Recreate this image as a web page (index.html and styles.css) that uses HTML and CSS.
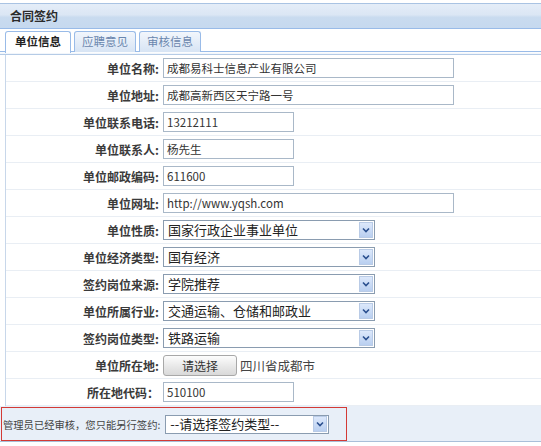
FILE: index.html
```html
<!DOCTYPE html>
<html lang="zh-CN">
<head>
<meta charset="utf-8">
<title>合同签约</title>
<link rel="stylesheet" href="styles.css">
</head>
<body>
<div class="panel">
  <div class="header">合同签约</div>
  <div class="tabbar">
    <div class="tab active">单位信息</div>
    <div class="tab">应聘意见</div>
    <div class="tab">审核信息</div>
  </div>
  <div class="strip"></div>
  <div class="form">
    <div class="row"><label>单位名称:</label><div class="input long">成都易科士信息产业有限公司</div></div>
    <div class="row"><label>单位地址:</label><div class="input long">成都高新西区天宁路一号</div></div>
    <div class="row"><label>单位联系电话:</label><div class="input short">13212111</div></div>
    <div class="row"><label>单位联系人:</label><div class="input short">杨先生</div></div>
    <div class="row"><label>单位邮政编码:</label><div class="input short">611600</div></div>
    <div class="row"><label>单位网址:</label><div class="input long">http://www.yqsh.com</div></div>
    <div class="row"><label>单位性质:</label><div class="select"><span class="stext">国家行政企业事业单位</span><span class="arrow"><svg width="8" height="6" viewBox="0 0 8 6"><path d="M1 1.5 L4 4.5 L7 1.5" fill="none" stroke="#2a4f8f" stroke-width="1.6"/></svg></span></div></div>
    <div class="row"><label>单位经济类型:</label><div class="select"><span class="stext">国有经济</span><span class="arrow"><svg width="8" height="6" viewBox="0 0 8 6"><path d="M1 1.5 L4 4.5 L7 1.5" fill="none" stroke="#2a4f8f" stroke-width="1.6"/></svg></span></div></div>
    <div class="row"><label>签约岗位来源:</label><div class="select"><span class="stext">学院推荐</span><span class="arrow"><svg width="8" height="6" viewBox="0 0 8 6"><path d="M1 1.5 L4 4.5 L7 1.5" fill="none" stroke="#2a4f8f" stroke-width="1.6"/></svg></span></div></div>
    <div class="row"><label>单位所属行业:</label><div class="select"><span class="stext">交通运输、仓储和邮政业</span><span class="arrow"><svg width="8" height="6" viewBox="0 0 8 6"><path d="M1 1.5 L4 4.5 L7 1.5" fill="none" stroke="#2a4f8f" stroke-width="1.6"/></svg></span></div></div>
    <div class="row"><label>签约岗位类型:</label><div class="select"><span class="stext">铁路运输</span><span class="arrow"><svg width="8" height="6" viewBox="0 0 8 6"><path d="M1 1.5 L4 4.5 L7 1.5" fill="none" stroke="#2a4f8f" stroke-width="1.6"/></svg></span></div></div>
    <div class="row"><label>单位所在地:</label><div class="field"><span class="btn">请选择</span><span class="place">四川省成都市</span></div></div>
    <div class="row"><label>所在地代码：</label><div class="input short">510100</div></div>
  </div>
  <div class="footer">
    <div class="notice">
      <span class="ntext">管理员已经审核，您只能另行签约:</span>
      <div class="select small"><span class="stext">--请选择签约类型--</span><span class="arrow"><svg width="8" height="6" viewBox="0 0 8 6"><path d="M1 1.5 L4 4.5 L7 1.5" fill="none" stroke="#2a4f8f" stroke-width="1.6"/></svg></span></div>
    </div>
  </div>
</div>
</body>
</html>
```

FILE: styles.css
```css
* { box-sizing: border-box; }
body {
  margin: 0;
  background: #fff;
  font-family: "Noto Sans CJK SC", "Noto Sans", sans-serif;
  font-size: 12px;
  color: #333;
}
.panel {
  width: 541px;
  padding-top: 3px;
}
.header {
  height: 26px;
  border-top: 1px solid #a9c3e3;
  border-bottom: 1px solid #99bbe8;
  background: linear-gradient(#e4edf8 0%, #dbe6f4 45%, #c9dbef 55%, #c6d9ef 100%);
  padding-left: 10px;
  font-weight: bold;
  color: #2b2b2b;
  line-height: 24px;
  font-size: 12px;
}
.tabbar {
  margin-top: 2px;
  display: flex;
  gap: 3px;
  padding-left: 5px;
  border-bottom: 1px solid #99bbe8;
  height: 21px;
}
.tab {
  width: 62px;
  height: 21px;
  border: 1px solid #99bbe8;
  border-bottom: none;
  border-radius: 3px 3px 0 0;
  background: linear-gradient(#f2f6fc, #d7e4f4);
  color: #6a86ad;
  line-height: 19px;
  font-size: 11.5px;
  text-align: center;
}
.tab.active {
  width: 66px;
  background: #fff;
  color: #222;
  font-weight: bold;
  height: 22px;
  margin-bottom: -1px;
}
.strip {
  height: 3px;
  background: linear-gradient(#fff, #eef3fa);
  border-bottom: 1px solid #b5cbe6;
}
.form {
  margin-left: 5px;
  border-left: 1px solid #c8d7ea;
}
.row {
  display: grid;
  grid-template-columns: 153px auto;
  column-gap: 4px;
  align-items: center;
  height: 27px;
  padding-top: 3px;
  padding-bottom: 3px;
  border-bottom: 1px solid #e9eef4;
}
.row label {
  text-align: right;
  font-weight: bold;
  color: #3a3a3a;
  white-space: nowrap;
}
.input {
  height: 20px;
  border: 1px solid #a9b8c8;
  background: #fff;
  padding-left: 3px;
  line-height: 18px;
  font-size: 11.5px;
  color: #333;
  white-space: nowrap;
}
.input.long { width: 291px; }
.input.short { width: 131px; }
.select {
  width: 212px;
  height: 20px;
  border: 1px solid #8a9cb0;
  background: #fff;
  display: flex;
  align-items: center;
  justify-content: space-between;
  padding: 0 1px 0 4px;
}
.stext {
  font-size: 13px;
  color: #222;
  line-height: 18px;
  white-space: nowrap;
}
.arrow {
  width: 14px;
  height: 16px;
  border: 1px solid #b9cbe6;
  background: linear-gradient(#dce8fb, #b9cff0);
  display: flex;
  align-items: center;
  justify-content: center;
}
.field {
  display: flex;
  align-items: center;
  gap: 3px;
}
.btn {
  width: 74px;
  height: 21px;
  border: 1px solid #a8a8a8;
  border-radius: 3px;
  background: linear-gradient(#fdfdfd, #e6e6e6 60%, #d9d9d9);
  text-align: center;
  line-height: 19px;
  color: #333;
}
.place {
  color: #444;
  font-size: 12.5px;
}
.footer {
  height: 36px;
  background: #e8eff8;
  border-bottom: 1px solid #a9bfd9;
  padding-top: 1px;
}
.notice {
  margin-left: 1px;
  width: 346px;
  height: 34px;
  border: 1px solid #d33a36;
  display: flex;
  align-items: center;
  gap: 5px;
  padding-left: 1px;
}
.ntext {
  font-size: 10.3px;
  color: #444;
  white-space: nowrap;
}
.select.small {
  width: 164px;
  height: 19px;
}
```
